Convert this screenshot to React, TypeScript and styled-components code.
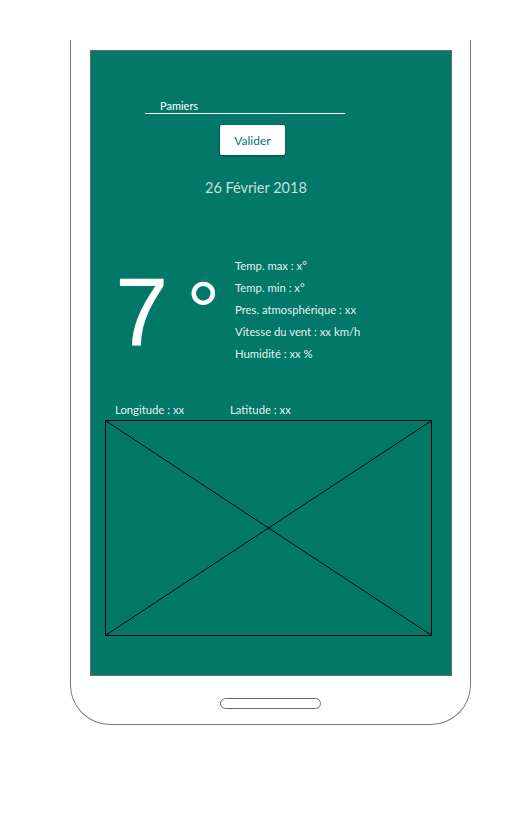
import React from 'react';
import styled, { createGlobalStyle } from 'styled-components';

const GlobalStyle = createGlobalStyle`
  html, body {
    margin: 0;
    padding: 0;
    background: #ffffff;
  }
  body {
    width: 522px;
    height: 836px;
    overflow: hidden;
    font-family: Lato, "Open Sans", sans-serif;
  }
`;

const TEAL = '#027869';

const Phone = styled.div`
  box-sizing: border-box;
  margin: 40px 0 0 70px;
  width: 401px;
  height: 685px;
  border: 1px solid #7a7a7a;
  border-top: none;
  border-radius: 0 0 40px 40px;
  padding: 10px 19px 0 19px;
  display: flex;
  flex-direction: column;
  align-items: flex-start;
`;

const Screen = styled.div`
  box-sizing: border-box;
  width: 362px;
  height: 626px;
  background: ${TEAL};
  border: 1px solid #6a6a6a;
  display: flex;
  flex-direction: column;
  align-items: flex-start;
  padding-top: 48px;
`;

const CityField = styled.div`
  box-sizing: border-box;
  margin-left: 54px;
  width: 200px;
  padding: 0 0 0 15px;
  border-bottom: 1px solid #ffffff;
  color: #ffffff;
  font-size: 11px;
  line-height: 14px;
`;

const Button = styled.button`
  margin: 11px 0 0 129px;
  width: 65px;
  height: 30px;
  border: none;
  border-radius: 2px;
  background: #ffffff;
  color: ${TEAL};
  font-family: Lato, "Open Sans", sans-serif;
  font-size: 12px;
  box-shadow: 0 1px 3px rgba(0, 0, 0, 0.35);
  padding: 0;
`;

const DateText = styled.div`
  margin: 23px 0 0 114px;
  color: rgba(255, 255, 255, 0.78);
  font-size: 14.5px;
  line-height: 20px;
`;

const WeatherRow = styled.div`
  display: flex;
  align-items: flex-start;
  margin-top: 61px;
  margin-left: 24px;
`;

const BigTemp = styled.div`
  width: 120px;
  height: 96px;
  font-family: "Liberation Sans", Arial, sans-serif;
  color: #ffffff;
  font-size: 96px;
  line-height: 96px;
  margin-top: 5px;
  white-space: pre;
`;

const Degree = styled.span`
  font-size: 84px;
  line-height: 1;
  margin-left: 18px;
  vertical-align: 5px;
`;

const Details = styled.ul`
  list-style: none;
  margin: 0;
  padding: 0;
  display: flex;
  flex-direction: column;
  gap: 8px;
`;

const Detail = styled.li`
  color: rgba(255, 255, 255, 0.92);
  font-size: 11.3px;
  line-height: 14px;
`;

const CoordsRow = styled.div`
  display: flex;
  margin: 42px 0 0 24px;
  color: rgba(255, 255, 255, 0.92);
  font-size: 11.3px;
  line-height: 14px;
`;

const Coord = styled.span<{ w?: number }>`
  width: ${(p) => (p.w ? `${p.w}px` : 'auto')};
`;

const MapBox = styled.div`
  box-sizing: border-box;
  margin: 3px 0 0 14px;
  width: 327px;
  height: 216px;
  border: 1px solid #000000;
  svg {
    display: block;
    width: 100%;
    height: 100%;
  }
`;

const HomeButton = styled.div`
  box-sizing: border-box;
  margin: 22px 0 0 130px;
  width: 101px;
  height: 11px;
  border: 1px solid #6a6a6a;
  border-radius: 6px;
`;

const details = [
  'Temp. max  : x°',
  'Temp. min : x°',
  'Pres. atmosphérique : xx',
  'Vitesse du vent : xx km/h',
  'Humidité : xx %',
];

export default function App() {
  return (
    <>
      <GlobalStyle />
      <Phone>
        <Screen>
          <CityField>Pamiers</CityField>
          <Button>Valider</Button>
          <DateText>26 Février 2018</DateText>
          <WeatherRow>
            <BigTemp>
              7<Degree>°</Degree>
            </BigTemp>
            <Details>
              {details.map((d) => (
                <Detail key={d}>{d}</Detail>
              ))}
            </Details>
          </WeatherRow>
          <CoordsRow>
            <Coord w={115}>Longitude : xx</Coord>
            <Coord>Latitude : xx</Coord>
          </CoordsRow>
          <MapBox>
            <svg viewBox="0 0 325 214" preserveAspectRatio="none">
              <line x1="0" y1="0" x2="325" y2="214" stroke="#000" strokeWidth="1" />
              <line x1="325" y1="0" x2="0" y2="214" stroke="#000" strokeWidth="1" />
            </svg>
          </MapBox>
        </Screen>
        <HomeButton />
      </Phone>
    </>
  );
}
